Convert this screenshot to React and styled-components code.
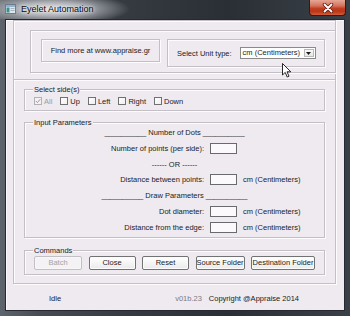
import React from 'react';
import styled, { createGlobalStyle, css } from 'styled-components';

const Global = createGlobalStyle`
  html, body { margin: 0; padding: 0; width: 350px; height: 316px; overflow: hidden; background: #2b3036; }
  * { box-sizing: border-box; }
`;

const etched = css`
  border: 1px solid #c4bfc7;
  box-shadow: inset 1px 1px 0 #fdfbfd, 1px 1px 0 #fdfbfd;
`;

const Window = styled.div`
  position: relative;
  width: 350px;
  height: 316px;
  display: flex;
  flex-direction: column;
  background: linear-gradient(90deg, #5e646b 0%, #464b52 12%, #363b42 35%, #2a2f35 65%, #394047 100%);
  font-family: "Liberation Sans", Arial, sans-serif;
  font-size: 7.5px;
  color: #1c1c1c;
`;

const TitleBar = styled.div`
  height: 19px;
  display: flex;
  align-items: flex-start;
  padding-left: 5px;
  background: radial-gradient(ellipse 78px 16px at 52px 9px, rgba(236, 236, 238, 0.95) 0%, rgba(200, 203, 208, 0.75) 45%, rgba(120, 125, 132, 0) 100%);
`;

const AppIcon = styled.svg`
  margin-top: 4px;
  flex: none;
`;

const Title = styled.div`
  margin-left: 5px;
  margin-top: 4px;
  font-size: 9px;
  line-height: 11px;
  color: #0a0a0a;
  text-shadow: 0 0 6px #f4f4f4, 0 0 3px #ffffff;
`;

const CloseButton = styled.div`
  margin-left: auto;
  margin-right: 4px;
  width: 37px;
  height: 16px;
  border: 1px solid #3d1610;
  border-top: none;
  border-radius: 0 0 4px 4px;
  background: linear-gradient(180deg, #e7a796 0%, #d4715a 40%, #c2401f 55%, #b8361a 75%, #d45c36 100%);
  display: flex;
  align-items: center;
  justify-content: center;
`;

const FrameBody = styled.div`
  flex: 1;
  display: flex;
  padding: 0 5px 5px 5px;
`;

const Client = styled.div`
  position: relative;
  flex: 1;
  display: flex;
  flex-direction: column;
  background: #eeeaef;
  border: 1px solid #262a30;
  box-shadow: inset 1px 1px 0 #fbf9fb;
  padding: 0 8px 0 7px;
`;

const Frame = styled.div`
  ${etched};
  height: 264px;
  display: flex;
  flex-direction: column;
`;

const TopRow = styled.div`
  padding: 9px 0 0 16px;
`;

const TopBox = styled.div`
  ${etched};
  margin-right: -1px;
  height: 43px;
  display: flex;
  align-items: flex-start;
  gap: 7px;
  padding: 8px 10px 0 10px;
`;

const FindBox = styled.div`
  ${etched};
  width: 119px;
  height: 23px;
  display: flex;
  align-items: center;
  justify-content: center;
  white-space: nowrap;
`;

const UnitBox = styled.div`
  ${etched};
  flex: 1;
  height: 28px;
  display: flex;
  align-items: center;
  padding: 0 7px 0 9px;
  gap: 8px;
  white-space: nowrap;
`;

const Combo = styled.div`
  flex: none;
  width: 76px;
  height: 12px;
  border: 1px solid #8a8a8a;
  background: #ffffff;
  display: flex;
  align-items: stretch;
`;

const ComboText = styled.span`
  flex: 1;
  padding-left: 2px;
  line-height: 10px;
`;

const ComboArrow = styled.span`
  width: 10px;
  margin: 1px;
  border: 1px solid #b9b9b9;
  background: linear-gradient(#fafafa, #e6e6e6);
  display: flex;
  align-items: center;
  justify-content: center;
`;

const Lower = styled.div`
  flex: 1;
  margin-top: 6px;
  border-top: 1px solid #c4bfc7;
  box-shadow: inset 0 1px 0 #fdfbfd;
  display: flex;
  flex-direction: column;
  gap: 7px;
  padding: 5px 10px 0 10px;
`;

const Group = styled.fieldset`
  margin: 0;
  min-width: 0;
  padding: ${(p) => p.$pad};
  border: 1px solid #c4bfc7;
  box-shadow: inset 1px 1px 0 #fdfbfd, 1px 1px 0 #fdfbfd;
  margin-top: ${(p) => p.$mt || 0}px;
`;

const Legend = styled.legend`
  margin-left: 8px;
  padding: 0 1px;
  line-height: 9px;
  font-size: 7.5px;
  background: #eeeaef;
`;

const SideRow = styled.div`
  display: flex;
  align-items: center;
  height: 12px;
  gap: 8px;
  padding-left: 9px;
`;

const CheckItem = styled.label`
  display: flex;
  align-items: center;
  gap: 2px;
  color: ${(p) => (p.$disabled ? '#9c9a9e' : '#1c1c1c')};
`;

const Box = styled.span`
  width: 8px;
  height: 8px;
  border: 1px solid ${(p) => (p.$disabled ? '#b3b1b5' : '#707070')};
  background: ${(p) => (p.$disabled ? '#f3f1f4' : 'linear-gradient(135deg, #ffffff, #f0eef0)')};
  display: flex;
  align-items: center;
  justify-content: center;
`;

const ParamGrid = styled.div`
  display: grid;
  grid-template-columns: 179px 27px 1fr;
  grid-auto-rows: 11px;
  column-gap: 6px;
  row-gap: 4.8px;
  align-items: center;
  padding-bottom: 4px;
`;

const Heading = styled.div`
  grid-column: 1 / -1;
  text-align: center;
  line-height: 11px;
  white-space: pre;
`;

const Label = styled.div`
  text-align: right;
  line-height: 11px;
  white-space: nowrap;
`;

const Field = styled.input`
  width: 27px;
  height: 11px;
  padding: 0;
  margin: 0;
  border: 1px solid #6a6a6c;
  background: #fcf9fc;
  font: inherit;
`;

const Unit = styled.div`
  line-height: 11px;
  white-space: nowrap;
`;

const ButtonRow = styled.div`
  display: flex;
  gap: 6.5px;
  padding-left: 9px;
`;

const Button = styled.button`
  flex: none;
  width: ${(p) => p.$w}px;
  height: 14px;
  margin: 0;
  padding: 0;
  font: inherit;
  line-height: 12px;
  white-space: nowrap;
  border: 1px solid ${(p) => (p.disabled ? '#c2c0c4' : '#727272')};
  border-radius: 2px;
  color: ${(p) => (p.disabled ? '#a4a2a6' : '#1c1c1c')};
  background: ${(p) => (p.disabled ? '#f4f2f4' : 'linear-gradient(#ffffff, #f6f5f6 50%, #ebeaeb)')};
  box-shadow: inset 0 0 0 1px ${(p) => (p.disabled ? '#f8f7f8' : '#fbfbfb')};
`;

const Status = styled.div`
  flex: 1;
  display: flex;
  align-items: center;
  padding: 2px 37px 0 36px;
`;

const StatusText = styled.span`
  color: ${(p) => p.$color || '#1c1c1c'};
  margin-left: ${(p) => p.$ml || 0};
`;

const Cursor = styled.svg`
  position: absolute;
  left: 276px;
  top: 43px;
`;

const sides = [
  { label: 'All', checked: true, disabled: true },
  { label: 'Up' },
  { label: 'Left' },
  { label: 'Right' },
  { label: 'Down' },
];

const Check = () => (
  <svg width="6" height="6" viewBox="0 0 6 6">
    <path d="M0.8 3 L2.4 4.6 L5.3 1.2" fill="none" stroke="#9e9ca0" strokeWidth="1" />
  </svg>
);

export default function App() {
  return (
    <>
      <Global />
      <Window>
        <TitleBar>
          <AppIcon width="11" height="10" viewBox="0 0 11 10">
            <rect x="0.5" y="0.5" width="10" height="9" fill="#dfe7ee" stroke="#6d7c8a" />
            <rect x="1" y="1" width="9" height="2" fill="#8fb3cf" />
            <rect x="1.5" y="3.5" width="3" height="5" fill="#3f8f8a" />
            <rect x="5.5" y="4" width="4" height="1" fill="#a8b4c0" />
            <rect x="5.5" y="6" width="4" height="1" fill="#a8b4c0" />
          </AppIcon>
          <Title>Eyelet Automation</Title>
          <CloseButton>
            <svg width="12" height="10" viewBox="0 0 12 10">
              <path d="M2.5 1.5 L9.5 8.5 M9.5 1.5 L2.5 8.5" stroke="#5a1c12" strokeWidth="3.4" strokeLinecap="round" />
              <path d="M2.5 1.5 L9.5 8.5 M9.5 1.5 L2.5 8.5" stroke="#ffffff" strokeWidth="1.8" strokeLinecap="round" />
            </svg>
          </CloseButton>
        </TitleBar>
        <FrameBody>
          <Client>
            <Frame>
              <TopRow>
                <TopBox>
                  <FindBox>Find more at www.appraise.gr</FindBox>
                  <UnitBox>
                    <span>Select Unit type:</span>
                    <Combo>
                      <ComboText>cm (Centimeters)</ComboText>
                      <ComboArrow>
                        <svg width="5" height="3" viewBox="0 0 5 3">
                          <path d="M0 0 H5 L2.5 3 Z" fill="#1a1a1a" />
                        </svg>
                      </ComboArrow>
                    </Combo>
                  </UnitBox>
                </TopBox>
              </TopRow>

              <Lower>
                <Group $pad="1px 0 3px 0">
                  <Legend>Select side(s)</Legend>
                  <SideRow>
                    {sides.map((s) => (
                      <CheckItem key={s.label} $disabled={s.disabled}>
                        <Box $disabled={s.disabled}>{s.checked && <Check />}</Box>
                        {s.label}
                      </CheckItem>
                    ))}
                  </SideRow>
                </Group>

                <Group $pad="0">
                  <Legend>Input Parameters</Legend>
                  <ParamGrid>
                    <Heading>{'__________ Number of Dots __________'}</Heading>
                    <Label>Number of points (per side):</Label>
                    <Field />
                    <Unit />
                    <Heading>{'------ OR ------'}</Heading>
                    <Label>Distance between points:</Label>
                    <Field />
                    <Unit>cm (Centimeters)</Unit>
                    <Heading>{'__________ Draw Parameters __________'}</Heading>
                    <Label>Dot diameter:</Label>
                    <Field />
                    <Unit>cm (Centimeters)</Unit>
                    <Label>Distance from the edge:</Label>
                    <Field />
                    <Unit>cm (Centimeters)</Unit>
                  </ParamGrid>
                </Group>

                <Group $pad="1px 0 4px 0" $mt={1}>
                  <Legend>Commands</Legend>
                  <ButtonRow>
                    <Button $w={48} disabled>Batch</Button>
                    <Button $w={47}>Close</Button>
                    <Button $w={47}>Reset</Button>
                    <Button $w={49}>Source Folder</Button>
                    <Button $w={64}>Destination Folder</Button>
                  </ButtonRow>
                </Group>
              </Lower>
            </Frame>

            <Status>
              <StatusText>Idle</StatusText>
              <StatusText $color="#7c7a7e" $ml="auto">v01b.23</StatusText>
              <StatusText $ml="7px">Copyright @Appraise 2014</StatusText>
            </Status>

            <Cursor width="10" height="15" viewBox="0 0 10 15">
              <path d="M0.5 0.5 L0.5 12 L3.2 9.4 L5.2 14 L7 13.2 L5 8.8 L8.8 8.8 Z" fill="#ffffff" stroke="#111111" strokeWidth="0.9" strokeLinejoin="round" />
            </Cursor>
          </Client>
        </FrameBody>
      </Window>
    </>
  );
}
